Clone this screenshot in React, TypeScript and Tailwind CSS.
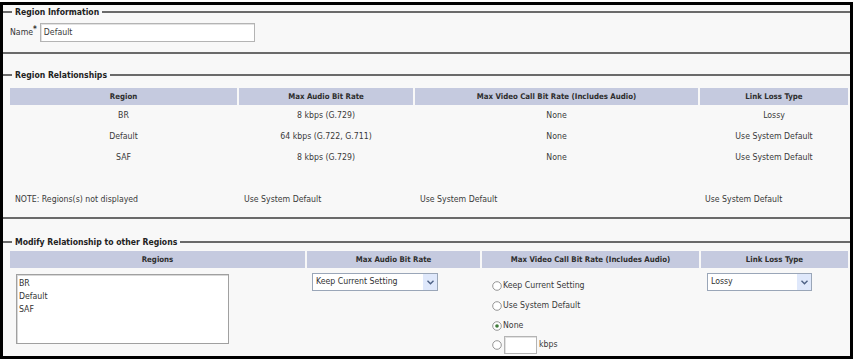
import React from 'react';

const cols2 = 'grid grid-cols-[227px_174px_283px_148px] gap-x-[2px]';
const cols3 = 'grid grid-cols-[295px_173px_217px_147px] gap-x-[2px]';

function Legend({ children }: { children: React.ReactNode }) {
  return (
    <div className="flex h-[14px] items-center">
      <div className="h-[2px] w-[9px] bg-[#6a6a6a]" />
      <span className="px-[3px] text-[8.6px] leading-none font-bold text-[#222]">{children}</span>
      <div className="h-[2px] flex-1 bg-[#6a6a6a]" />
    </div>
  );
}

function Th({ children }: { children: React.ReactNode }) {
  return (
    <div className="flex h-[17px] items-center justify-center bg-[#c5cadf] text-[7.8px] font-bold text-[#2e2e2e]">
      {children}
    </div>
  );
}

function Chevron() {
  return (
    <div className="flex h-[16px] w-[14px] items-center justify-center bg-[#dfe8fb]">
      <svg width="7" height="5" viewBox="0 0 7 5">
        <path d="M0.5 0.8 L3.5 3.8 L6.5 0.8" fill="none" stroke="#4d6185" strokeWidth="1.4" />
      </svg>
    </div>
  );
}

function Select({ value, width }: { value: string; width: string }) {
  return (
    <div className={`flex h-[18px] items-center border border-[#9aa6b8] bg-white ${width}`}>
      <span className="flex-1 pl-[3px] text-[#333]">{value}</span>
      <Chevron />
    </div>
  );
}

function Radio({ checked }: { checked?: boolean }) {
  return (
    <svg width="10" height="10" viewBox="0 0 10 10" className="shrink-0">
      <circle cx="5" cy="5" r="4.3" fill="white" stroke="#8b8b8b" strokeWidth="0.9" />
      {checked && <circle cx="5" cy="5" r="1.8" fill="#3f7a3a" />}
    </svg>
  );
}

const rows = [
  ['BR', '8 kbps (G.729)', 'None', 'Lossy'],
  ['Default', '64 kbps (G.722, G.711)', 'None', 'Use System Default'],
  ['SAF', '8 kbps (G.729)', 'None', 'Use System Default'],
];

export default function App() {
  return (
    <div className="h-[361px] w-[854px] bg-white pt-[2px] font-['DejaVu_Sans_Condensed','DejaVu_Sans',sans-serif] text-[8.7px] text-[#3a3a3a]">
      <div className="h-[357px] w-[853px] overflow-hidden border-[3px] border-black bg-[#f8f8f8]">
        {/* Region Information */}
        <div className="border-b-2 border-[#6a6a6a] pb-[10px]">
          <Legend>Region Information</Legend>
          <div className="mt-[4px] flex items-center pl-[7px]">
            <span className="text-[#333]">Name</span>
            <span className="mb-[6px] text-[8px] font-bold text-[#333]">*</span>
            <div className="ml-[3px] flex h-[19px] w-[215px] items-center border border-[#b4b4b4] bg-white pl-[3px] shadow-[inset_1px_1px_0_#e2e2e2]">
              Default
            </div>
          </div>
        </div>

        {/* Region Relationships */}
        <div className="mt-[14px] border-b-2 border-[#6a6a6a] pb-[7px]">
          <Legend>Region Relationships</Legend>
          <div className={`mt-[6px] pl-[7px] ${cols2}`}>
            <Th>Region</Th>
            <Th>Max Audio Bit Rate</Th>
            <Th>Max Video Call Bit Rate (Includes Audio)</Th>
            <Th>Link Loss Type</Th>
            {rows.map((r) =>
              r.map((c, i) => (
                <div key={r[0] + i} className="flex h-[21px] items-center justify-center">
                  {c}
                </div>
              ))
            )}
            <div className="col-span-4 h-[21px]" />
            <div className="flex h-[21px] items-center pl-[5px]">NOTE: Regions(s) not displayed</div>
            <div className="flex h-[21px] items-center pl-[5px]">Use System Default</div>
            <div className="flex h-[21px] items-center pl-[5px]">Use System Default</div>
            <div className="flex h-[21px] items-center pl-[5px]">Use System Default</div>
          </div>
        </div>

        {/* Modify Relationship */}
        <div className="mt-[16px]">
          <Legend>Modify Relationship to other Regions</Legend>
          <div className={`mt-[2px] pl-[7px] ${cols3}`}>
            <Th>Regions</Th>
            <Th>Max Audio Bit Rate</Th>
            <Th>Max Video Call Bit Rate (Includes Audio)</Th>
            <Th>Link Loss Type</Th>

            <div className="pt-[6px] pl-[6px]">
              <div className="flex h-[70px] w-[213px] flex-col border border-[#a0a0a0] bg-white pt-[2px] pl-[2px] leading-[13px] text-[#333] shadow-[inset_1px_1px_0_#d8d8d8]">
                <span>BR</span>
                <span>Default</span>
                <span>SAF</span>
              </div>
            </div>

            <div className="pt-[5px] pl-[5px]">
              <Select value="Keep Current Setting" width="w-[126px]" />
            </div>

            <div className="flex flex-col pt-[8px] pl-[10px]">
              <div className="flex h-[20px] items-center gap-[1px]">
                <Radio />
                <span>Keep Current Setting</span>
              </div>
              <div className="flex h-[20px] items-center gap-[1px]">
                <Radio />
                <span>Use System Default</span>
              </div>
              <div className="flex h-[20px] items-center gap-[1px]">
                <Radio checked />
                <span>None</span>
              </div>
              <div className="flex h-[18px] items-center">
                <Radio />
                <div className="ml-[2px] h-[18px] w-[33px] border border-[#b4b4b4] bg-white shadow-[inset_1px_1px_0_#e2e2e2]" />
                <span className="ml-[2px]">kbps</span>
              </div>
            </div>

            <div className="pt-[5px] pl-[6px]">
              <Select value="Lossy" width="w-[105px]" />
            </div>
          </div>
        </div>
      </div>
    </div>
  );
}
